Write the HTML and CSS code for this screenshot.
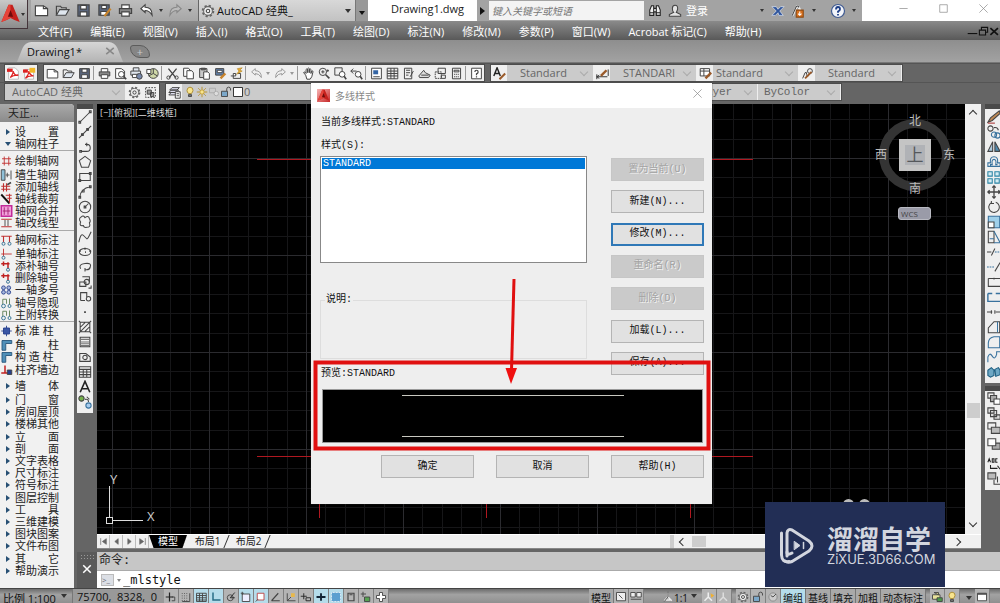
FILE: index.html
```html
<!DOCTYPE html>
<html lang="zh-CN">
<head>
<meta charset="utf-8">
<title>Drawing1.dwg</title>
<link rel="stylesheet" href="styles.css">
</head>
<body>
<div class="app">
  <button class="app-button" aria-label="A"><span data-icon="alogo"></span><span class="caret"></span></button>

  <header class="titlebar">
    <div class="quick" data-tools="new open save saveas print undo ^ redo ^"></div>
    <div class="workspace-pick"><span data-icon="gear"></span><span class="ws-name">AutoCAD 经典_</span><span class="caret"></span></div>
    <button class="more" aria-label="more"><span class="caret wide"></span></button>
    <div class="doc-title">Drawing1.dwg</div>
    <div class="info">
      <span class="play"></span>
      <input class="search" type="text" placeholder="键入关键字或短语" aria-label="键入关键字或短语">
      <span data-icon="binoculars"></span>
      <button class="login"><span data-icon="user"></span>登录</button>
      <div class="account" data-tools="^ exchange share ^"></div>
      <div class="account help" data-tools="help ^"></div>
    </div>
    <div class="window-buttons" data-tools="min max close"></div>
  </header>

  <nav class="menubar">
    <a href="#">文件(F)</a><a href="#">编辑(E)</a><a href="#">视图(V)</a><a href="#">插入(I)</a><a href="#">格式(O)</a><a href="#">工具(T)</a><a href="#">绘图(D)</a><a href="#">标注(N)</a><a href="#">修改(M)</a><a href="#">参数(P)</a><a href="#">窗口(W)</a><a href="#">Acrobat 标记(C)</a><a href="#">帮助(H)</a>
    <div class="mdi" data-tools="mmin mrest mclose"></div>
  </nav>

  <div class="doc-tabs">
    <div class="doc-tab"><span>Drawing1*</span><button class="tab-close" aria-label="close"><span data-icon="tabx"></span></button></div>
    <button class="tab-new" aria-label="new"><span>+</span></button>
  </div>

  <div class="toolrow">
    <div class="group" data-tools="pdf pdf2"></div>
    <div class="group" data-tools="new open save | print preview publish globe | cut copy paste brush block | undo2 ^ redo2 ^ | hand zoom zoomwin zoomprev | props grid sheet stamp markup calc | helpbox"></div>
    <div class="group styles">
      <span class="cell" data-icon="textstyle"></span>
      <span class="combo w-a"><select aria-label="text"><option>Standard</option></select></span>
      <span class="cell" data-icon="dimstyle"></span>
      <span class="combo w-a"><select aria-label="dim"><option>STANDARI</option></select></span>
      <span class="cell" data-icon="tablestyle"></span>
      <span class="combo w-b"><select aria-label="table"><option>Standard</option></select></span>
      <span class="cell" data-icon="leader"></span>
      <span class="combo w-a"><select aria-label="leader"><option>Standard</option></select></span>
    </div>
  </div>
  <div class="toolrow">
    <div class="group">
      <span class="combo w-ws"><select aria-label="workspace"><option>AutoCAD 经典</option></select></span>
      <div class="inline-tools" data-tools="gear wsave"></div>
    </div>
    <div class="group">
      <span class="cell" data-icon="layers"></span>
      <div class="layer-state"><span data-icon="bulb"></span><span data-icon="sun"></span><span data-icon="vp"></span><span data-icon="unlock"></span><span data-icon="box"></span><span>0</span></div>
      <span class="combo w-layer"><select aria-label="layer"><option>ByLayer</option></select></span>
      <span class="combo w-color"><select aria-label="color"><option>ByColor</option></select></span>
    </div>
  </div>

  <main class="main">
    <aside class="palette">
      <h2>天正...</h2>
      <ul class="palette-list" id="palette"></ul>
    </aside>
    <div class="right">
      <div class="stage">
        <div class="vbar" data-tools="line xline pline polygon rect arc circle cloud spline ellipse earc insert mkblock point hatch gradient region table bigA addsel"></div>
        <div class="drawing">
          <div class="canvas-row">
            <div class="canvas">
              <svg class="grid" width="100%" height="100%">
                <defs>
                  <pattern id="g" x="15" y="54" width="97" height="97" patternUnits="userSpaceOnUse">
                    <path d="M19.5 0V97M39.5 0V97M58.5 0V97M78.5 0V97M0 19.5H97M0 39.5H97M0 58.5H97M0 78.5H97" stroke="#161618"/>
                    <path d="M.5 0V97M0 .5H97" stroke="#2b2b2f"/>
                  </pattern>
                </defs>
                <rect width="100%" height="100%" fill="url(#g)"/>
                <path d="M160 55.500H656M160 352.500H656M222.500 380V414M389.500 380V414M593.500 380V414" stroke="#b01820"/>
                <g fill="none" stroke="#ddd"><path d="M12.500 382V413M16 416.500H46"/><rect x="9.500" y="413.500" width="6" height="6"/></g>
                <g class="axis"><text x="13" y="380">Y</text><text x="50" y="417">X</text></g>
              </svg>
              <span class="view-label">[−][俯视][二维线框]</span>
              <div class="cube">
                <span class="n">北</span><span class="w">西</span><span class="top">上</span><span class="e">东</span><span class="s">南</span>
              </div>
              <button class="wcs">WCS</button>
              <span class="dots"><i></i><i></i></span>
            </div>
            <div class="vscroll"><span class="chev up"></span><span class="vthumb"></span><span class="chev down"></span></div>
          </div>
          <div class="layout-row">
            <div class="nav-tools" data-tools="first prev next last"></div>
            <button class="sheet-tab on">模型</button><button class="sheet-tab">布局1</button><button class="sheet-tab">布局2</button>
            <div class="hscroll"><span class="split"></span><span class="chev left"></span><span class="hthumb"></span><span class="chev rightward"></span></div>
          </div>
        </div>
        <div class="rbar">
          <div class="vbar" data-tools="erase copyobj mirror offset array move rotate scale stretch trim extend breakpt break join chamfer fillet blend explode"></div>
          <div class="vbar second" data-tools="ord1 ord2 ord3 ord4 - abc ord5"></div>
        </div>
      </div>
      <section class="command">
        <div class="cmd-handle"><span class="dotgrip"></span><button aria-label="close"><span data-icon="whitex"></span></button></div>
        <div class="cmd-body">
          <div class="cmd-history">命令:</div>
          <label class="cmd-line"><span class="prompt">&gt;_</span><span class="caret"></span><input type="text" value="_mlstyle" aria-label="命令"></label>
        </div>
      </section>
    </div>
  </main>

  <footer class="status">
    <button class="scale">比例 1:100<span class="caret"></span></button>
    <output class="coords">75700,&nbsp; 8328,&nbsp; 0</output>
    <div class="toggles" data-tools="snap dots *gridt *ortho polar *osnap *osnap3 otrack ducs dyn *lwt *tpy qp sc plus"></div>
    <div class="status-right">
      <button class="txt">模型</button>
      <div class="toggles" data-tools="lay1 lay2"></div>
      <button class="txt annot"><span data-icon="person"></span>1:1<span class="caret"></span></button>
      <div class="toggles" data-tools="ann1 ann2"></div>
      <div class="toggles gap" data-tools="gear unlock clock"></div>
      <button class="txt on">编组</button><button class="txt">基线</button><button class="txt">填充</button><button class="txt">加粗</button><button class="txt">动态标注</button>
      <div class="toggles tray" data-tools="printg bulb"></div>
      <span class="caret"></span>
      <div class="toggles" data-tools="clean"></div>
    </div>
  </footer>

  <div class="dialog" role="dialog" aria-labelledby="dlg-title">
    <div class="dlg-head"><span class="dlg-logo" data-icon="alogo"></span><h1 id="dlg-title">多线样式</h1><button aria-label="close"><span data-icon="close"></span></button></div>
    <div class="dlg-body">
      <p>当前多线样式:STANDARD</p>
      <div class="dlg-cols">
        <div class="dlg-left">
          <span id="lst">样式(S):</span>
          <ul class="listbox" role="listbox" aria-labelledby="lst"><li role="option" aria-selected="true">STANDARD</li></ul>
          <fieldset><legend>说明:</legend></fieldset>
          <span class="pv">预览:STANDARD</span>
        </div>
        <div class="dlg-buttons">
          <button disabled>置为当前(U)</button>
          <button>新建(N)...</button>
          <button class="focus">修改(M)...</button>
          <button disabled>重命名(R)</button>
          <button disabled>删除(D)</button>
          <button>加载(L)...</button>
          <button>保存(A)...</button>
        </div>
      </div>
      <div class="preview"><span></span><span></span></div>
      <div class="dlg-foot"><button>确定</button><button>取消</button><button>帮助(H)</button></div>
    </div>
    <svg class="note" viewBox="0 0 401 421" width="401" height="421">
      <rect x="4.500" y="279.500" width="393" height="86" fill="none" stroke="#e01010" stroke-width="4"/>
      <path d="M203 196L200.500 287" stroke="#e01010" stroke-width="3" fill="none"/>
      <path d="M194.500 285H206L200 301Z" fill="#f01010"/>
    </svg>
  </div>

  <div class="mark">
    <svg viewBox="0 0 36 38" width="36" height="38" fill="none" stroke="#d3d6df" stroke-width="3" stroke-linejoin="round" stroke-linecap="round">
      <path d="M2.500 6V28Q3 36 10 34.500"/><path d="M8 29V6Q8.500 1.500 13 3L30 14Q36 19 30 24L13 34.500Q9 36 6 34"/><path d="M8 25Q8 29 13 26"/><path d="M15.500 14.500L21 18.500L15.500 22.500Z" fill="#d3d6df" stroke-width="1"/><path d="M24.500 15.500V21.500" stroke-width="1.500"/>
    </svg>
    <div><b>溜溜自学</b><span>ZiXUE.3D66.COM</span></div>
  </div>
</div>
<script src="app.js"></script>
</body>
</html>
```
FILE: styles.css
```css
*, *::before, *::after { box-sizing: border-box; }
html, body { margin: 0; height: 100%; overflow: hidden; }
body { font: 11px/12px "Open Sans", "Noto Sans CJK SC", sans-serif; color: #222; }
button, input, select { font: inherit; color: inherit; border: 0; padding: 0; margin: 0; background: none; border-radius: 0; }
button { white-space: nowrap; }
ul, p, h1, h2, fieldset { margin: 0; padding: 0; list-style: none; font-size: inherit; font-weight: 400; }
a { color: inherit; text-decoration: none; }
[data-icon] { display: inline-flex; flex: none; }
.i { width: 14px; height: 14px; display: block; fill: none; stroke: #444; stroke-width: 1.2; flex: none; }
.tool { display: flex; align-items: center; justify-content: center; width: 16px; height: 14px; flex: none; }
[data-tools] { display: flex; align-items: center; }
.caret { display: inline-block; width: 0; height: 0; border: 3px solid transparent; border-top: 4px solid #333; border-bottom: 0; flex: none; }
.caret.small { border-width: 2px; border-top-width: 3px; border-bottom: 0; margin: 0 2px; }
.sep { width: 1px; height: 14px; background: #999; margin: 0 2px 0 1px; flex: none; }

.app { position: relative; display: flex; flex-direction: column; height: 100vh; background: #656565; }
.app-button { position: absolute; left: 0; top: 0; z-index: 2; width: 28px; height: 29px; display: flex; align-items: center; background: linear-gradient(#c9c9c9, #8c8c8c); border: solid #44343a; border-width: 0 1px 1px 0; }
.app-button .i { width: 21px; height: 22px; }
.app-button .caret { border-width: 2px; border-top-width: 3px; border-bottom: 0; }

.titlebar { display: flex; align-items: stretch; height: 21px; flex: none; background: #a3a3a3; padding-left: 31px; }
.quick { width: 168px; background: linear-gradient(#bdbdbd, #a6a6a6); border-right: 1px solid #666; padding-left: 2px; gap: 5px; }
.quick .tool { width: 16px; }
.quick .i { width: 15px; height: 15px; }
.quick .caret.small { margin: 0 -1px 0 0; }
.workspace-pick { display: flex; align-items: center; width: 157px; padding: 0 4px 0 2px; gap: 2px; background: linear-gradient(#d8d8d8, #c2c2c2); border-right: 1px solid #777; color: #111; }
.ws-name { flex: 1; }
.more { width: 12px; background: #999; }
.caret.wide { border-top-color: #111; }
.doc-title { width: 109px; background: #fff; text-align: center; line-height: 18px; color: #222; padding-left: 10px; }
.info { flex: 1; display: flex; align-items: center; }
.play { border: 4px solid transparent; border-left: 5px solid #111; border-right: 0; margin: 0 4px 0 3px; }
.search { width: 155px; height: 19px; background: #f3f3f3; font-style: italic; font-size: 10px; padding-left: 3px; margin-right: 4px; }
.search::placeholder { color: #777; opacity: 1; }
.login { display: flex; align-items: center; gap: 4px; color: #fff; margin-left: 6px; flex: 1; }
.account { gap: 4px; }
.help { margin: 0 4px 0 12px; }
.help .i { width: 16px; height: 16px; }
.window-buttons { width: 138px; background: #fff; justify-content: flex-end; gap: 24px; padding: 0 9px 5px 0; }
.window-buttons .i { stroke: #888; stroke-width: 1; width: 11px; height: 11px; }

.menubar { display: flex; align-items: center; height: 19px; flex: none; gap: 18px; padding: 2px 0 0 38px; color: #fff; background: linear-gradient(#8a8a8a, #595959); white-space: nowrap; }
.mdi { margin-left: auto; }
.mdi .tool { width: 11px; }
.mdi .i { width: 11px; height: 11px; stroke: #111; stroke-width: 1.6; }

.doc-tabs { display: flex; align-items: flex-end; height: 23px; flex: none; padding-left: 21px; background: linear-gradient(#8e8e8e, #a2a2a2); border-bottom: 1px solid #777; }
.doc-tab { position: relative; z-index: 0; display: flex; align-items: center; justify-content: space-between; width: 98px; height: 20px; padding: 0 4px 0 6px; color: #111; }
.doc-tab::before, .doc-tab::after { content: ""; position: absolute; z-index: -1; top: 0; bottom: 0; background: linear-gradient(#d6d6d6, #b4b4b4); }
.doc-tab::before { left: 0; right: 20px; border-radius: 6px 0 0 0; transform: skewX(-22deg); }
.doc-tab::after { left: 20px; right: 0; border-radius: 0 6px 0 0; transform: skewX(22deg); }
.tab-close .i { width: 10px; height: 10px; }
.tab-new { width: 20px; height: 13px; margin: 0 0 4px 11px; background: #858585; border: 1px solid #5c5c5c; border-radius: 3px 10px 3px 10px; color: #ccc; line-height: 11px; }

.toolrow { display: flex; height: 19px; flex: none; padding: 2px 0 1px 5px; gap: 7px; background: #656565; box-shadow: inset 0 1px #555; }
.group { display: flex; align-items: center; height: 16px; background: #efefef; outline: 1px solid #4c4c4c; flex: none; }
.group .i { width: 13px; height: 13px; }
.group .caret.small { border-top-color: #999; }
.cell { width: 16px; justify-content: center; }
.combo { position: relative; display: flex; height: 16px; background: #cbcbcb; border-right: 1px solid #eee; color: #666; }
.combo::after { content: ""; position: absolute; right: 6px; top: 4px; width: 6px; height: 6px; border: solid #aaa; border-width: 0 1px 1px 0; transform: rotate(45deg); pointer-events: none; }
.combo select { appearance: none; width: 100%; padding-left: 13px; }
.w-a { width: 87px; }
.w-b { width: 86px; }
.w-b select { padding-left: 3px; }
.w-ws { width: 121px; }
.w-ws select { padding-left: 7px; }
.inline-tools { padding-right: 1px; }
.layer-state { display: flex; align-items: center; width: 500px; height: 16px; background: #cbcbcb; padding-left: 2px; color: #666; }
.layer-state .i { width: 12px; height: 12px; }
.w-layer, .w-color { font-family: "Liberation Mono", monospace; }
.w-layer { width: 76px; }
.w-layer select { padding-left: 4px; }
.w-color { width: 83px; }
.w-color select { padding-left: 6px; }

.main { flex: 1; min-height: 0; display: flex; gap: 3px; padding-top: 3px; background: #656565; }
.palette { display: flex; flex-direction: column; width: 74px; flex: none; background: #f1f1f1; border-radius: 0 4px 0 0; overflow: hidden; }
.palette h2 { padding: 3px 0 3px 8px; background: linear-gradient(#a9a9a9, #8b8b8b); line-height: 12px; }
.palette-list { flex: 1; display: flex; flex-direction: column; padding: 4px 0 11px; }
.palette-list li { flex: 1; display: flex; align-items: center; }
.palette-list li.rule { border-top: 1px solid #aaa; padding-top: 2px; flex: 1.240; }
.palette-list li.space { border-top-color: transparent; }
.palette-list .i { width: 13px; height: 12px; }
.palette-list .ico { width: 15px; }
.palette-list .tri { justify-content: center; display: flex; }
.tri.r::before, .tri.d::before { content: ""; width: 0; height: 0; border: 3px solid transparent; }
.tri.r::before { border-left: 4px solid #274f74; border-right: 0; }
.tri.d::before { border-top: 4px solid #274f74; border-bottom: 0; }
.palette-list a { width: 44px; white-space: nowrap; text-align: justify; text-align-last: justify; }
.palette-list a.three { width: 38px; }

.right { flex: 1; min-width: 0; display: flex; flex-direction: column; }
.stage { flex: 1; min-height: 0; display: flex; }
.vbar { flex-direction: column; align-self: flex-start; width: 16px; padding: 0 0 4px; background: #efefef; border-top: 5px solid #4a4a4a; flex: none; }
.vbar .tool { height: 15px; }
.vbar .hr { height: 5px; width: 14px; }
.rbar { width: 15px; overflow: hidden; margin-left: 4px; flex: none; }
.rbar .vbar { width: 18px; }
.rbar .vbar.second { margin-top: 3px; }
.drawing { flex: 1; min-width: 0; display: flex; flex-direction: column; margin-left: 4px; border-bottom: 1px solid #888; }
.canvas-row { flex: 1; min-height: 0; display: flex; }
.canvas { position: relative; flex: 1; min-width: 0; background: #000; overflow: hidden; }
.grid { position: absolute; inset: 0; }
.axis { fill: #ccc; font: 13px "Open Sans", sans-serif; }
.view-label { position: absolute; left: 3px; top: 3px; color: #ddd; font-size: 9px; }
.cube { position: absolute; right: 8px; top: 9px; width: 84px; height: 84px; display: grid; grid-template: 16px 1fr 16px / 16px 1fr 16px; align-items: center; justify-items: center; color: #bbb; font-size: 12px; }
.cube::before { content: ""; position: absolute; left: 6px; top: 6px; width: 72px; height: 72px; border: 9px solid #343434; border-radius: 50%; }
.cube span { position: relative; }
.cube .n, .cube .s { grid-column: 2; }
.cube .n { grid-row: 1; }
.cube .s { grid-row: 3; }
.cube .w, .cube .top, .cube .e { grid-row: 2; }
.cube .top { width: 32px; height: 32px; border: 6px solid #c4c4c4; background: #b0b2b6; color: #55585c; font-size: 17px; line-height: 19px; text-align: center; }
.wcs { position: absolute; right: 34px; top: 103px; width: 33px; height: 13px; background: #9a9ba8; border: 1px solid #b9bac2; border-radius: 3px; color: #444; font-size: 8px; line-height: 9px; text-align: left; padding-left: 2px; }
.dots { position: absolute; right: 95px; bottom: 24px; display: flex; gap: 5px; }
.dots i { width: 11px; height: 11px; border-radius: 50%; background: #bbb; }
.vscroll { display: flex; flex-direction: column; align-items: center; justify-content: space-between; width: 16px; background: #f0f0f0; padding: 7px 0 8px; flex: none; }
.vthumb { width: 13px; height: 15px; background: #cdcdcd; margin-top: 183px; }
.chev { width: 6px; height: 6px; border: solid #333; border-width: 1px 0 0 1px; flex: none; }
.up { transform: rotate(45deg); }
.down { transform: rotate(225deg); }
.left { transform: rotate(-45deg); }
.rightward { transform: rotate(135deg); }
.layout-row { display: flex; align-items: stretch; height: 14px; background: #f0f0f0; border-top: 1px solid #fff; }
.nav-tools .tool { width: 13px; border-right: 1px solid #bbb; height: 13px; }
.nav-tools .i { width: 9px; height: 9px; fill: #666; stroke: #666; }
.sheet-tab { position: relative; z-index: 0; width: 41px; line-height: 13px; font-size: 10px; }
.sheet-tab::after { content: ""; position: absolute; z-index: -1; right: 1px; top: 0; bottom: 0; width: 1px; background: #333; transform: skewX(-22deg); }
.sheet-tab.on { color: #fff; background: #000; clip-path: polygon(0 0, 100% 0, 88% 100%, 12% 100%); width: 38px; }
.hscroll { flex: 1; display: flex; align-items: center; padding: 0 21px 0 401px; }
.split { width: 4px; height: 13px; background: #cdcdcd; }
.hscroll .left { margin: 0 6px; }
.hthumb { width: 14px; height: 11px; background: #cdcdcd; }
.rightward { margin-left: auto; }

.command { display: flex; height: 39px; flex: none; padding-top: 3px; }
.cmd-handle { width: 20px; display: flex; flex-direction: column; align-items: center; gap: 4px; background: #5a5a5a; padding-top: 2px; }
.cmd-handle .i { width: 12px; height: 12px; }
.dotgrip { width: 15px; height: 5px; background: radial-gradient(#999 35%, transparent 45%) 0 0 / 3px 3px; }
.cmd-body { flex: 1; }
.cmd-history { height: 19px; background: #c6c6c6; border-bottom: 1px solid #aaa; padding-left: 2px; font: 12px/17px "DejaVu Sans Mono", "Noto Sans CJK SC", monospace; }
.cmd-line { display: flex; align-items: center; height: 18px; background: #fff; padding-left: 4px; }
.cmd-line input { flex: 1; font: 12px/16px "DejaVu Sans Mono", monospace; color: #111; padding-left: 1px; outline: 0; }
.prompt { width: 13px; height: 12px; border: 1px solid #bbb; background: #dcdfe5; font-size: 8px; line-height: 9px; color: #667; margin-right: 2px; }
.cmd-line .caret { border-width: 2px; border-top: 3px solid #888; border-bottom: 0; margin: 0 1px; }

.status { display: flex; align-items: flex-start; height: 15px; flex: none; overflow: hidden; background: linear-gradient(#6c6c6c, #a2a2a2 40%, #909090); border-top: 1px solid #444; color: #111; white-space: nowrap; }
.scale { display: flex; gap: 5px; width: 72px; padding: 3px 0 0 3px; line-height: 14px; }
.scale .caret { margin-top: 2px; }
.coords { width: 92px; padding: 1px 0 0 4px; line-height: 14px; border-left: 1px solid #777; background: #999; }
.toggles { height: 15px; }
.toggles .tool { width: 15px; height: 15px; background: #b4b4b4; border-right: 1px solid #808080; }
.toggles .tool.on { background: #b5dcea; }
.toggles .i { width: 12px; height: 12px; }
.status-right { display: flex; margin-left: auto; padding-right: 10px; height: 15px; }
.txt { background: #a9a9a9; border-right: 1px solid #777; padding: 2px 2px 0; line-height: 14px; font-size: 10px; }
.txt.on { background: #b5dcea; }
.annot { display: flex; align-items: flex-start; margin-left: 16px; background: none; border: 0; width: 42px; }
.annot .i { width: 12px; height: 12px; }
.annot .caret { margin: 3px 0 0 3px; }
.gap { margin-left: 4px; }
.tray { margin: 0 4px 0 4px; }
.status-right > .caret { margin: 7px 3px 0 2px; }

.dialog { position: absolute; left: 311px; top: 83px; width: 401px; background: #eeeeee; font: 10px/14px "Liberation Mono", "Noto Sans CJK SC", monospace; color: #111; box-shadow: 0 0 1px #333; }
.dlg-head { display: flex; align-items: center; height: 25px; background: #fff; padding: 0 9px 0 6px; gap: 5px; color: #888; }
.dlg-head h1 { flex: 1; font-family: "Noto Sans CJK SC", sans-serif; }
.dlg-logo { background: linear-gradient(135deg, #f7b4b4, #c62828); }
.dlg-logo .i { width: 13px; height: 13px; }
.dlg-head button .i { stroke: #888; stroke-width: 1; width: 11px; height: 11px; }
.dlg-body { padding: 8px 8px 26px 9px; }
.dlg-body p { padding-left: 1px; }
.dlg-cols { display: flex; justify-content: space-between; margin-top: 9px; }
.dlg-left { display: flex; flex-direction: column; width: 267px; }
.dlg-left span { padding-left: 1px; }
.listbox { height: 107px; margin-top: 3px; background: #fff; border: 1px solid #888; padding: 1px; }
.listbox li { background: #0078d7; color: #fff; line-height: 11px; padding-left: 1px; }
fieldset { border: 1px solid #ddd; height: 66px; margin-top: 30px; min-width: 0; }
legend { margin-left: 4px; padding: 0 1px; }
.dlg-left .pv { margin-top: 8px; }
.dlg-buttons { display: flex; flex-direction: column; justify-content: space-between; width: 93px; padding: 19px 0 6px; }
.dialog .dlg-buttons button, .dlg-foot button { height: 23px; background: #e1e1e1; border: 1px solid #b4b4b4; }
.dialog .dlg-buttons button.focus { border: 2px solid #2f78b7; }
.dialog .dlg-buttons button:disabled { background: #cacaca; border-color: #c6c6c6; color: #a3a3a3; text-shadow: 1px 1px #f2f2f2; }
.preview { display: flex; flex-direction: column; justify-content: space-between; align-items: center; height: 54px; margin: 8px 1px 0 2px; padding: 5px 0; background: #000; border: 1px solid #999; }
.preview span { width: 222px; height: 1px; background: #c8c8c0; }
.dlg-foot { display: grid; grid-template-columns: 93px 93px 93px; justify-content: end; column-gap: 22px; margin-top: 12px; }
.note { position: absolute; left: 0; top: 0; pointer-events: none; }

.mark { position: absolute; right: 55px; bottom: 16px; display: flex; align-items: center; gap: 12px; width: 180px; height: 85px; padding: 2px 0 0 14px; background: #222e55; color: #d3d6df; }
.mark b, .mark span { display: block; white-space: nowrap; }
.mark b { font: 700 26px/26px "Noto Sans CJK SC", sans-serif; }
.mark span { font: 13px/16px Inter, sans-serif; }
```
FILE: app.js
```js
const ink = {
  alogo: '<path d="M1 14L6.500 1H9.500L15 14L11 12.500L8 11L5 12.500Z" fill="#c4201c" stroke="none"/><path d="M8 1V11L5 12.500L1 14L6.500 1Z" fill="#e5443a" stroke="none"/><path d="M8 5L10 10H6Z" fill="#6d0c0c" stroke="none"/>',
  new: '<path d="M1.500 3H10L14.500 6V13.500H1.500Z" fill="#fff"/><path d="M10 3V6H14.500"/>',
  open: '<path d="M1.500 13V3.500H6L7 5H12V7"/><path d="M1.500 13L5 7H15L11.500 13Z" fill="#dfe6ee"/>',
  save: '<path d="M2 2H14V14H2Z" fill="#59657c"/><path d="M5 2.500H11V6.500H5ZM4.500 9.500H11.500V14H4.500Z" fill="#fff"/>',
  saveas: '<path d="M2 2H13V13H2Z" fill="#59657c"/><path d="M5 2.500H10V6H5ZM4 9H10V13H4Z" fill="#fff"/><path d="M8 14L14.500 6" stroke="#c8842c" stroke-width="2.500"/>',
  print: '<path d="M4 6V2H12V6" fill="#fff"/><path d="M1.500 6H14.500V11H1.500Z" fill="#888"/><path d="M4 9.500H12V14H4Z" fill="#fff"/>',
  undo: '<path d="M2 6L6.500 2V4.500Q14 4.500 14 13Q11 8 6.500 8V10Z" fill="#fff"/>',
  redo: '<path d="M14 6L9.500 2V4.500Q2 4.500 2 13Q5 8 9.500 8V10Z" fill="#bbb" stroke="#888"/>',
  undo2: '<path d="M2 6L6.500 2V4.500Q14 4.500 14 13Q11 8 6.500 8V10Z" stroke="#999"/>',
  redo2: '<path d="M14 6L9.500 2V4.500Q2 4.500 2 13Q5 8 9.500 8V10Z" stroke="#999"/>',
  gear: '<circle cx="8" cy="8" r="6" stroke-width="2.400" stroke-dasharray="2.500 2.210" stroke="#666"/><circle cx="8" cy="8" r="5" fill="#eee" stroke="#666"/><circle cx="8" cy="8" r="2"/>',
  binoculars: '<path d="M2 13V7L4 2H6.500V13ZM9.500 13V2H12L14 7V13ZM6.500 5H9.500V9H6.500M2 10H6.500M9.500 10H14" fill="#eee" stroke="#222"/>',
  user: '<path d="M8 1.500Q11.500 1.500 11 6Q10 9 9.500 9.500L14.500 12V14H1.500V12L6.500 9.500Q5 8 5 5Q5 1.500 8 1.500Z" fill="#e4e4e4"/>',
  exchange: '<path d="M1 3H6L8 6L11 3H15L10 8L14 13H9L8 10L5 13H1L6 8Z" fill="#2f559c" stroke="#dce4f2" stroke-width=".8"/>',
  share: '<path d="M2 13L6 4Q7 1 9 4L11 8" stroke="#eee" stroke-width="2.500"/><path d="M1.500 13L6 3Q8 1 9 4"/><path d="M6 7H14V15H6Z" fill="#d9701c" stroke="#8d4a12"/><path d="M10 8.500V13M8 11L10 13L12 11" stroke="#fff"/>',
  help: '<circle cx="8" cy="8" r="6.500" fill="#f3f5fa" stroke="#3f5a91"/><path d="M6 6.500Q6 4 8 4T10 6.300Q10 7.500 8 8.500V9.800M8 11V12.500" stroke="#1d3e86" stroke-width="1.800"/>',
  min: '<path d="M2 8H14"/>', max: '<path d="M2.500 2.500H13.500V13.500H2.500Z"/>', close: '<path d="M2 2L14 14M14 2L2 14"/>',
  mmin: '<path d="M1 11H15"/>', mrest: '<path d="M5 5V2H14V9H11M2 6H11V13H2Z"/>', mclose: '<path d="M2 3L13 13M13 3L2 13" stroke-width="2.500"/>',
  tabx: '<path d="M2 3L14 13M14 3L2 13" stroke="#888" stroke-width="2.500"/>', whitex: '<path d="M3 3L13 13M13 3L3 13" stroke="#fff" stroke-width="2"/>',
  pdf: '<path d="M2 1H10L14 5V15H2Z" fill="#fff" stroke="#bbb"/><path d="M0 2H7V6H0Z" fill="#d22" stroke="none"/><path d="M4 13Q8 8 7.500 5Q9 11 14 10Q7 10 4 13Z" stroke="#d22" stroke-width="1.600"/>',
  pdf2: '<path d="M2 3H10L13 7V15H2Z" fill="#fff" stroke="#bbb"/><path d="M0 3H6V7H0Z" fill="#d22" stroke="none"/><path d="M3 14Q8 8 7 5Q9 11 13 11Q7 10 3 14Z" stroke="#d22" stroke-width="1.600"/><path d="M8 1H15V7H8Z" fill="#f2b727" stroke="none"/>',
  preview: '<path d="M2 2H9L13 5V14H2Z" fill="#fff"/><circle cx="9" cy="9" r="3.500" fill="#fff"/><path d="M11.500 11.500L15 15" stroke-width="2"/>',
  publish: '<path d="M4 5V1H11V5M1 5H13V10H1Z" fill="#dfe6ee"/><path d="M3 9H10V13H3Z" fill="#fff"/><circle cx="11.500" cy="11.500" r="3.500" fill="#78a" />',
  globe: '<circle cx="9" cy="8" r="6" fill="#cfd8a8"/><path d="M9 8V2M9 8L14 11M9 8L3 11"/><path d="M1 3H6V8H1Z" fill="#fff"/>',
  cut: '<path d="M3 2L12 13M13 2L4 13" stroke-width="1.600"/><circle cx="3" cy="13" r="2"/><circle cx="13" cy="13" r="2"/>',
  copy: '<path d="M2 1.500H8L10 4V11.500H2Z" fill="#fff"/><path d="M6 4.500H12L14 7V14.500H6Z" fill="#fff"/>',
  paste: '<path d="M2 2H11V13H2Z" fill="#c9c9c9"/><path d="M7 6H12L14 8V15H7Z" fill="#fff"/><path d="M4 1.500H9V3.500H4Z" fill="#777"/>',
  brush: '<path d="M2 2H12V10H2Z" fill="#6386b3"/><path d="M4 4H10V7H4Z" fill="#fff"/><path d="M8 14L14 8" stroke="#c8842c" stroke-width="3"/>',
  block: '<path d="M1 11H4V14H13V8H10"/><path d="M9 2L15 1L12 4L15 5L8 9L11 5Z" fill="#f0b030" stroke="#a97a18" stroke-width=".7"/><path d="M4 8H7V11H4Z" fill="#fff"/>',
  hand: '<path d="M4.500 10L2 7Q2 5.500 4 6.500L5 8V3Q6 1.500 7 3V7V2Q8 .500 9 2V7V3Q10 1.500 11 3V8L12 5Q13.500 4 13.500 6L12 12L10 15H6Z" fill="#fff"/>',
  zoom: '<circle cx="6" cy="6" r="4.500"/><path d="M9.500 9.500L14 14" stroke-width="2"/><path d="M4 6H8M6 4V8M12 3V6M10.500 4.500H13.500"/>',
  zoomwin: '<path d="M1 1H10V10H1Z"/><circle cx="10" cy="9" r="3.500" fill="#fff"/><path d="M12.500 11.500L15 15" stroke-width="2"/>',
  zoomprev: '<path d="M1 5L4 2M1 5L4 8M1 5H8"/><circle cx="10" cy="9" r="3.500" fill="#fff"/><path d="M12.500 11.500L15 15" stroke-width="2"/>',
  props: '<path d="M2 1.500H14V14.500H2Z" fill="#fff"/><path d="M4 4H10V9H4Z" fill="#3465a4" stroke="none"/><path d="M4 12H12"/>',
  grid: '<path d="M1.500 1.500H14.500V14.500H1.500ZM6 1.500V14.500M10 1.500V14.500M1.500 5H14.500M1.500 8H14.500M1.500 11H14.500"/>',
  sheet: '<path d="M3 1.500H12V14.500H3ZM5 4H10M5 7H10M5 10H8"/><path d="M10 12L14 5"/>',
  stamp: '<path d="M1 11L7 4L9 7L15 10L13 13H2Z" fill="#ddd"/><path d="M4 10H13"/>',
  markup: '<path d="M5 1.500H14V8H5Z"/><path d="M1.500 6H9V14H1.500Z" stroke-dasharray="2 1"/><path d="M9 10H14V14H9Z"/>',
  calc: '<path d="M3 1.500H13V14.500H3ZM5 4H11V6H5Z"/><path d="M5 9H11M5 12H11" stroke-dasharray="1.500 1"/>',
  helpbox: '<path d="M2 1.500H14V14.500H2Z" fill="#fff"/><path d="M6 6Q6 4 8 4T10 6Q10 7.500 8 8.500V10M8 11.500V13" stroke-width="1.500"/>',
  textstyle: '<path d="M1 11L5 1L9 11M2.500 8H7.500" stroke="#222" stroke-width="1.800"/><path d="M8 15L15 8" stroke="#9a5a2a" stroke-width="2.500"/>',
  dimstyle: '<path d="M1 9V15M15 3V11M1 12H14M4 10L1 12L4 14" stroke="#333"/><path d="M6 11L13 4" stroke="#9a5a2a" stroke-width="3"/>',
  tablestyle: '<path d="M1.500 2H13V11H1.500ZM1.500 5H13M6 2V11" fill="#fff"/><path d="M8 14L15 7" stroke="#9a5a2a" stroke-width="3"/>',
  leader: '<path d="M2 14L5 7Q7 5 7 9T10 10"/><circle cx="11" cy="5" r="3"/><path d="M5 14L13 6" stroke="#9a5a2a" stroke-width="2.500"/>',
  wsave: '<path d="M2 2H14V14H2Z" stroke-dasharray="2 1.500"/><path d="M4 5H9V10H4ZM8 8H12V13H8Z" fill="#999"/>',
  layers: '<path d="M5 2H14L11 5H2ZM4 5H13L10 8H1ZM4 8H12L10 11H1Z" fill="#dde"/><path d="M9 7H15V15H9ZM10.500 9.500H13.500M10.500 12H13.500" fill="#fff"/>',
  bulb: '<path d="M8 1.500Q12.500 2 12 6Q11.500 8 10 10H6Q4 8 4 6Q4 2 8 1.500Z" fill="#f8e48e" stroke="#a8892e"/><path d="M6 11.500H10V14H6Z" fill="#777"/>',
  sun: '<circle cx="8" cy="8" r="3" fill="#f8e48e" stroke="#b58e26"/><path d="M8 1V4M8 12V15M1 8H4M12 8H15M3 3L5 5M11 11L13 13M13 3L11 5M5 11L3 13" stroke="#b58e26"/>',
  vp: '<path d="M2 3H10V9H2Z" stroke="#aaa"/><circle cx="11" cy="10" r="3" fill="#ddd" stroke="#aaa"/>',
  unlock: '<path d="M2 7H10V14H2Z" fill="#7ba7c9"/><path d="M9 7V4Q9 1.500 11.500 1.500T14 4V6"/>',
  box: '<path d="M2 2H14V14H2Z" fill="#fff" stroke="#222"/>',
  line: '<path d="M2 14L14 2"/><path d="M1 13H3V15H1ZM13 1H15V3H13Z"/>', xline: '<path d="M1 15L15 1"/><path d="M4 10H6V12H4ZM10 4H12V6H10Z" fill="#444"/>',
  pline: '<path d="M3 13H10Q14 13 14 9T10 5H8M10 3V7M2 12H4V14H2Z"/>', polygon: '<path d="M8 1.500L14.500 6.500L12 14H4L1.500 6.500Z"/>', rect: '<path d="M2 4H14V12H2Z"/><path d="M1 11H3V13H1ZM13 3H15V5H13Z"/>',
  arc: '<path d="M2 14Q3 4 14 2M1 13H3V15H1ZM13 1H15V3H13ZM5 6H7V8H5Z"/>', circle: '<circle cx="8" cy="8" r="6.500"/><path d="M8 8L12 4M7 7H9V9H7Z"/>',
  cloud: '<path d="M4 2Q6 0 8 3Q12 0 13 4Q15 7 13 9Q15 14 10 14Q7 15 6 12Q1 13 3 8Q0 4 4 2Z"/>', spline: '<path d="M1 14Q3 3 6 6T10 10T15 2"/>', ellipse: '<ellipse cx="8" cy="8" rx="6.500" ry="4"/><path d="M1 7H3M13 7H15M7 4H9M8 8H9" stroke-width="2"/>',
  earc: '<path d="M3 10Q0 5 8 4T14 8Q13 12 8 11M8 9V13"/>', insert: '<path d="M5 2H13V8M2 8H9V13H2Z"/><circle cx="10" cy="8" r="3"/><path d="M12 15H15V12"/>', mkblock: '<path d="M3 12V3H10V8M3 12H8"/><circle cx="12" cy="10" r="2.500"/>', point: '<path d="M7 8H9" stroke-width="2"/>',
  hatch: '<path d="M2.500 2.500H13.500V13.500H2.500ZM3 8L8 3M3 13L13 3M8 13L13 8M1 1L3 3M15 1L13 3M1 15L3 13M15 15L13 13"/>', gradient: '<path d="M2.500 2.500H13.500V13.500H2.500Z"/><path d="M3 5H13M3 8H13M3 10H13M3 12H13" stroke="#777"/>',
  region: '<path d="M2 4H9L14 8V13H2Z"/><circle cx="8" cy="8.500" r="2.500"/>', table: '<path d="M1.500 2H14.500V14H1.500ZM1.500 5H14.500M1.500 8H14.500M1.500 11H14.500M6 5V14M10 5V14"/>',
  bigA: '<path d="M2.500 14L8 1.500L13.500 14M4.500 10H11.500" stroke="#222" stroke-width="1.800"/>', addsel: '<circle cx="4" cy="4" r="3" fill="#74b04a"/><circle cx="12" cy="12" r="3" fill="#a9cdee" stroke="#38729e"/><path d="M8 5Q12 4 12 8M10 2L13 5"/>',
  erase: '<path d="M1 14L4 9L14 1L15 4L6 12Z" fill="#c08a55"/><path d="M1 15H9" stroke="#a33"/>', copyobj: '<circle cx="4" cy="4" r="3"/><path d="M8 3Q12 2 13 6"/><circle cx="8" cy="11" r="3" stroke="#38729e"/><circle cx="12" cy="12" r="3" stroke="#38729e"/>', mirror: '<path d="M6.500 2V13H1Z" fill="#a9c8dd"/><path d="M9 2V13H15Z" fill="#4e88ad"/>', offset: '<path d="M1 13V9H4Q3 2 8 2T12 9H15V13ZM4 13V11H6Q5 5 8 5T10 11H12" stroke="#38729e"/>',
  array: '<path d="M1 2H6V7H1ZM9 2H14V7H9ZM1 10H6V15H1ZM9 10H14V15H9Z" stroke="#2a84a4" fill="#d4ebf3"/>', move: '<path d="M8 1V15M1 8H15M6 3L8 1L10 3M6 13L8 15L10 13M3 6L1 8L3 10M13 6L15 8L13 10" stroke-width="1.500"/>', rotate: '<path d="M10 2.500A6 6 0 1 1 5 3M5 1L5 4H8"/>', scale: '<path d="M1.500 1.500H14.500V14.500H1.500Z" fill="#9fd0ea" stroke="#38729e"/><path d="M1.500 8H8V14.500H1.500Z" fill="#fff"/>',
  stretch: '<path d="M1.500 1.500H8V14.500H1.500Z"/><path d="M8 1.500L15 14.500H8M3 10H8" stroke="#38729e"/>', trim: '<path d="M0 8H5M5 12L9 4"/><path d="M9 8H16" stroke="#38729e" stroke-dasharray="2 1"/>', extend: '<path d="M0 8H8" stroke-dasharray="2 1" stroke="#38729e"/><path d="M9 13L15 3"/>', breakpt: '<path d="M1.500 4H15M1.500 4V13H15M8 3V5" />', break: '<path d="M1 4H6M10 4H15M1 4V13H15" stroke-width="1.600" stroke="#38729e"/>', join: '<path d="M0 8H6M10 8H16M5 6V10M9 6V10"/>', chamfer: '<path d="M1.500 14.500V9L8 2H14.500V14.500Z"/><path d="M12 2V14" stroke="#38729e"/>', fillet: '<path d="M1.500 14.500V9Q2 3 8 2H14.500V14.500Z" stroke="#38729e"/>', blend: '<path d="M1 14V8Q3 2 6 7T11 5V2H15" stroke="#38729e"/>', explode: '<path d="M1 6L5 3L8 6V12L4 14L1 12ZM9 5L13 3L15 6V11L10 13Z" fill="#6da7c4" stroke="#1b5d80"/>',
  ord1: '<path d="M1 1H8V7H1Z"/><path d="M4 4H11V11H4Z" fill="#aaa"/><path d="M8 8H15V14H8Z" fill="#fff"/>', ord2: '<path d="M1 1H8V7H1ZM4 4H11V11H4ZM8 9H15V14H8Z" fill="#ddd"/>', ord3: '<path d="M1 1H10V8H1Z"/><path d="M5 6H15V13H5Z" fill="#bbb"/>', ord4: '<path d="M6 7H15V14H6Z" fill="#aaa"/><path d="M1 2H10V10H1Z" fill="#fff"/>', ord5: '<path d="M1 1H10V8H1Z" fill="#bbb"/><path d="M8 9V14H15M12 5V12"/>', abc: '<path d="M1 6L2.500 2L4 6M6 2V6H8V2ZM12 2H10V6H12M4 9V13H12M12 10L15 14" stroke="#222"/>',
  first: '<path d="M3 2V14M13 3L6 8L13 13Z"/>', prev: '<path d="M11 3L5 8L11 13Z"/>', next: '<path d="M5 3L11 8L5 13Z"/>', last: '<path d="M13 2V14M3 3L10 8L3 13Z"/>',
  snap: '<path d="M6 2V14M1 8H11" stroke="#222" stroke-width="1.600"/><path d="M9 8H13V13H9" />', dots: '<path d="M3 3V14M6 3V14M9 3V14" stroke-dasharray="1 2"/><path d="M13 3V14H3"/>', gridt: '<path d="M2 3H15V14H2ZM2 6H15M2 9H15M2 12H15M6 3V14M10 3V14"/>', ortho: '<path d="M4 2V12H14" stroke="#2a6e87" stroke-width="2"/>', polar: '<circle cx="7" cy="9" r="4"/><path d="M7 9H13M7 9L13 2" stroke="#222"/>', osnap: '<path d="M3 4H13V14H3Z" fill="#eef"/><path d="M1 3H5M3 1V5"/>', osnap3: '<path d="M3 3H12V12H3Z" fill="#fff" stroke="#b44"/><path d="M1 14L4 11" />', otrack: '<path d="M2 13H13M2 13L11 3" stroke-width="1.500"/>', ducs: '<path d="M3 3V13H14M3 13L9 7" /><path d="M8 3H13V8H8Z" fill="#e8b84a" stroke="none"/>', dyn: '<path d="M1 7H9M5 3V11M8 9H14V13H8Z" stroke="#222"/>', lwt: '<path d="M2 8H14M8 3V13" stroke="#123" stroke-width="2.500"/>', tpy: '<path d="M2 2H14V14H2Z" fill="#5c9fd0" stroke="#fff" stroke-dasharray="1 1"/>', qp: '<path d="M4 3H12V13H4ZM6 5H10" stroke-width="1.600"/>', sc: '<path d="M1 4H8M4 1V8"/><path d="M6 8H13V14H6Z" fill="#57a152"/>', plus: '<path d="M6 2H10V6H14V10H10V14H6V10H2V6H6Z" fill="#fff"/>',
  lay1: '<path d="M2 2H14V13H2Z" fill="#eee"/><path d="M5 5L10 10"/>', lay2: '<path d="M1 2H7V8H1ZM9 2H15V8H9ZM1 11H15" fill="#eee"/>', person: '<path d="M8 2V8L3 13M8 8L13 13M5 12H11" stroke="#eee" stroke-width="2"/><path d="M8 1V8L3 14"/>', ann1: '<path d="M7 2V8L2 13M7 8L12 13" stroke="#eee" stroke-width="2"/><path d="M10 3L15 6L11 9Z" fill="#f0b030" stroke="none"/>', ann2: '<path d="M7 2V8L2 13M7 8L12 13" stroke="#ddd" stroke-width="2"/>', clock: '<circle cx="8" cy="8" r="5.500" fill="#ccc" stroke="#888"/><path d="M5 6L8 8L12 4"/>', printg: '<path d="M2 5H12V11H2ZM4 2H10V5Z" fill="#e8e39a"/><path d="M8 9H15V14H8Z" fill="#4b9a49"/>', clean: '<path d="M2 3H14V13H2Z" fill="#fff"/><path d="M2 4H14" stroke-width="2"/>',
  p1: '<path d="M5 2V14M11 2V14M2 5H14M2 11H14" stroke="#c03030"/>', p2: '<path d="M1 1H6V15H1Z" fill="#8fc0d8"/><path d="M7 8H12M9 5V11M14 2V14"/>', p3: '<path d="M4 3V14M8 3V14M1 7H13M1 11H13" stroke="#c03030" stroke-width="1.500"/><path d="M9 5L14 2" stroke-width="2"/>', p4: '<path d="M1 2L12 14" stroke="#111" stroke-width="2.500"/><path d="M7 3H15M9 7H15M12 1V13" stroke="#c03030" stroke-width="1.500"/>', p5: '<path d="M1 1H15V15H1Z" fill="#f3a0dc" stroke="#c22b98" stroke-width="2"/><path d="M5 3V13M10 3V13M3 8H13" stroke="#a2206e"/>', p6: '<path d="M1 3H15M1 13H15" stroke="#c03030" stroke-width="1.500"/><path d="M6 4V12M10 4V12"/>',
  p7: '<path d="M4 3V11M12 3V11M1 3H15" stroke="#c03030" stroke-width="1.500"/><circle cx="4" cy="13" r="2" stroke="#2c6c90"/><circle cx="12" cy="13" r="2" stroke="#2c6c90"/>', p8: '<path d="M4 1V11M1 8H15" stroke="#c03030"/><circle cx="4" cy="13" r="2" stroke="#2c6c90"/>', p9: '<path d="M1 5H12M4 2V8M10 3V11" stroke="#c02020" stroke-width="2"/><circle cx="10" cy="13" r="2" stroke="#2c6c90"/>', p10: '<circle cx="4" cy="5" r="2.500"/><circle cx="11" cy="5" r="2.500"/><circle cx="4" cy="11" r="2.500"/><circle cx="11" cy="11" r="2.500"/>', p11: '<path d="M3 10V3H8V9M12 2V10" stroke="#5f7f55"/><circle cx="4" cy="12" r="2.500" stroke="#2c6c90"/><circle cx="12" cy="12" r="2" stroke="#2c6c90"/>', p12: '<path d="M8 1V15M1 8H15" stroke="#26408c"/><path d="M4 4H12V12H4Z" fill="#3a56a5" stroke="#26408c"/>', p13: '<path d="M2 15V2H15V6H7V15Z" fill="#4f8fb8" stroke="#27557a"/>', p14: '<path d="M1 12H15M6 2V12" stroke="#c02020" stroke-width="2"/><path d="M9 8H15V14H9Z" fill="#26408c"/>'
};
ink.p10 = ink.p10.replace(/<circle/g, '<circle stroke="#26408c" fill="#a8b8de"');
const svg = name => `<svg class="i" viewBox="0 0 16 16" aria-hidden="true">${ink[name]}</svg>`;

document.querySelectorAll('[data-icon]').forEach(el => { el.innerHTML = svg(el.dataset.icon); });
document.querySelectorAll('[data-tools]').forEach(el => {
  el.innerHTML = el.dataset.tools.split(' ').map(t => {
    if (t === '^') return '<span class="caret small"></span>';
    if (t === '|') return '<span class="sep"></span>';
    if (t === '-') return '<span class="hr"></span>';
    const on = t[0] === '*';
    const name = on ? t.slice(1) : t;
    return `<button class="tool${on ? ' on' : ''}" aria-label="${name}">${svg(name)}</button>`;
  }).join('');
});

const rows = `r设 置,d轴网柱子,|p1 绘制轴网,p2 墙生轴网,p3 添加轴线,p4 轴线裁剪,p5 轴网合并,p6 轴改线型,|p7 轴网标注,p8 单轴标注,p9 添补轴号,p9 删除轴号,p10 一轴多号,p11 轴号隐现,p11 主附转换,|p12 标 准 柱,p13 角 柱,p13 构 造 柱,p14 柱齐墙边,/r墙 体,r门 窗,r房间屋顶,r楼梯其他,r立 面,r剖 面,r文字表格,r尺寸标注,r符号标注,r图层控制,r工 具,r三维建模,r图块图案,r文件布图,r其 它,r帮助演示`.split(',');
document.getElementById('palette').innerHTML = rows.map(row => {
  const cls = row[0] === '|' ? 'rule' : row[0] === '/' ? 'rule space' : '';
  if (cls) row = row.slice(1);
  let icon, text;
  if (/^[rd]/.test(row)) { icon = `<span class="ico tri ${row[0]}"></span>`; text = row.slice(1); }
  else { const [, name, rest] = row.match(/^(p\d+) (.*)$/); icon = `<span class="ico">${svg(name)}</span>`; text = rest; }
  return `<li class="${cls}">${icon}<a href="#" class="${text.split(' ').length === 3 ? 'three' : ''}">${text}</a></li>`;
}).join('');
```
